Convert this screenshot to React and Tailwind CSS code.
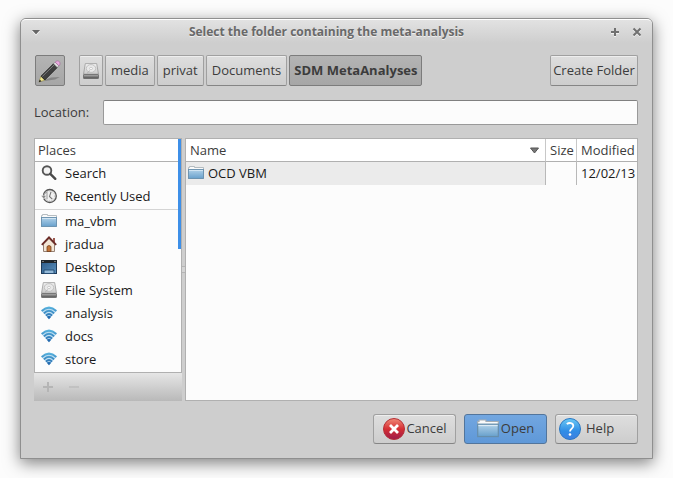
import { useState } from "react";

const PLACES = [
  { name: "Search", icon: SearchIcon },
  { name: "Recently Used", icon: RecentIcon },
  { name: "ma_vbm", icon: FolderIcon, divider: true },
  { name: "jradua", icon: HomeIcon },
  { name: "Desktop", icon: DesktopIcon },
  { name: "File System", icon: DriveIcon },
  { name: "analysis", icon: WifiIcon },
  { name: "docs", icon: WifiIcon },
  { name: "store", icon: WifiIcon },
];

const PATH = ["media", "privat", "Documents", "SDM MetaAnalyses"];

const FILES = [{ name: "OCD VBM", size: "", modified: "12/02/13" }];

// --- Icons ---
function SearchIcon() {
  return (
    <svg width="16" height="16" viewBox="0 0 16 16" fill="none">
      <circle cx="6" cy="5.5" r="4.3" fill="#f4f4f4" stroke="#555" strokeWidth="1.9" />
      <path d="M9.3 8.8 14.3 13.8" stroke="#4a4a4a" strokeWidth="2.4" strokeLinecap="round" />
    </svg>
  );
}

function RecentIcon() {
  return (
    <svg width="16" height="16" viewBox="0 0 16 16" fill="none">
      <circle cx="8.8" cy="8" r="6.5" fill="#e4e4e4" stroke="#555" strokeWidth="1.3" />
      <circle cx="8.8" cy="8" r="5" fill="#f1f1f1" stroke="#aaa" strokeWidth="0.8" strokeDasharray="1 1.5" />
      <path d="M10 3.8 8.5 8.5l2.8 2.6" stroke="#777" strokeWidth="1.1" />
      <path d="M0 7.5h5.6L2.8 11z" fill="#888" stroke="#f7f7f7" strokeWidth="0.6" />
      <path d="M2.8 8c.1-2.400 1.400-3.600 3.200-3.800v7" stroke="#999" />
    </svg>
  );
}

function FolderIcon({ size = 16 }) {
  return (
    <svg width={size} height={size} viewBox="0 0 16 16">
      <defs>
        <linearGradient id="folder" x1="0" y1="0" x2="0" y2="1">
          <stop offset="0" stopColor="#b2d2e9" />
          <stop offset="1" stopColor="#68a0cc" />
        </linearGradient>
      </defs>
      <path d="M.5 5.500V2.500h1v-1h5v1h9v3z" fill="#fafafa" stroke="#a5adb3" strokeWidth="0.8" />
      <rect x="0.5" y="4.500" width="15" height="9" fill="url(#folder)" stroke="#668eac" strokeWidth="0.9" />
      <path d="M1 5.500h14" stroke="#dbeaf5" strokeWidth="0.8" />
    </svg>
  );
}

function HomeIcon() {
  return (
    <svg width="16" height="16" viewBox="0 0 16 16">
      <path d="M12 2h2v5h-2z" fill="#9c5a50" />
      <path d="M2.500 8 8 2.500 13.500 8v7.500h-11z" fill="#f3e6d6" stroke="#8a7466" strokeWidth="0.9" />
      <path d="M.8 8.800 8 1.400l7.200 7.400" fill="none" stroke="#6b2b26" strokeWidth="1.800" />
      <path d="M6 15.500v-5q2-2 4 0v5z" fill="#c47436" stroke="#74411f" strokeWidth="0.8" />
    </svg>
  );
}

function DesktopIcon() {
  return (
    <svg width="16" height="16" viewBox="0 0 16 16">
      <defs>
        <linearGradient id="screen" x1="0" y1="0" x2="1" y2="1">
          <stop offset="0" stopColor="#2c5a88" />
          <stop offset="1" stopColor="#5b90bd" />
        </linearGradient>
      </defs>
      <rect x="0.500" y="1.500" width="15" height="13" fill="url(#screen)" stroke="#203c5a" />
      <path d="M0 1h16v3H0z" fill="#20272d" />
      <path d="M1 2.500h2M13 2.500h2" stroke="#777" />
      <path d="M3 14.500v-3.500h10v3.500z" fill="#93b9d8" stroke="#234a70" strokeWidth="0.9" />
    </svg>
  );
}

function DriveIcon() {
  return (
    <svg width="16" height="16" viewBox="0 0 16 16">
      <defs>
        <linearGradient id="drive" x1="0" y1="0" x2="0" y2="1">
          <stop offset="0" stopColor="#f1f1f1" />
          <stop offset="1" stopColor="#c9c9c9" />
        </linearGradient>
        <linearGradient id="driveFront" x1="0" y1="0" x2="0" y2="1">
          <stop offset="0" stopColor="#b5b5b5" />
          <stop offset="1" stopColor="#4c4c4c" />
        </linearGradient>
      </defs>
      <path d="M2.300.6h11.400l1.800 10.600H.5z" fill="url(#drive)" stroke="#9a9a9a" strokeWidth="0.8" />
      <ellipse cx="8" cy="5.500" rx="4.700" ry="3.900" fill="#e9e9e9" stroke="#b9b9b9" strokeWidth="0.8" />
      <ellipse cx="8" cy="5.500" rx="1.500" ry="1.200" fill="#f9f9f9" stroke="#b5b5b5" strokeWidth="0.6" />
      <path d="M4 10.300 7 7.500" stroke="#aaa" strokeWidth="0.8" />
      <rect x="0.500" y="11.500" width="15" height="4" rx="0.600" fill="url(#driveFront)" stroke="#666" strokeWidth="0.8" />
    </svg>
  );
}

function WifiIcon() {
  return (
    <svg width="16" height="16" viewBox="0 0 16 16" fill="none">
      <defs>
        <linearGradient id="wifi" gradientUnits="userSpaceOnUse" x1="0" y1="2" x2="0" y2="14">
          <stop offset="0" stopColor="#58b3de" />
          <stop offset="1" stopColor="#1d60a8" />
        </linearGradient>
      </defs>
      <path d="M.3 5.800Q8-1.300 15.700 5.800L8 14.200z" fill="#c0e0f2" />
      <g stroke="url(#wifi)" strokeWidth="2">
        <path d="M.6 6Q8-.8 15.400 6" />
        <path d="M2.900 8.400Q8 3.200 13.100 8.400" />
        <path d="M5 10.700Q8 7.400 11 10.700" />
      </g>
      <path d="M5.800 11.700Q8 9.700 10.200 11.700L8 14.200z" fill="url(#wifi)" />
    </svg>
  );
}

function PencilIcon() {
  return (
    <svg width="24" height="24" viewBox="0 0 24 24">
      <path d="M3 22.500 13 18.500l9-.5-5 2.500z" fill="#000" opacity="0.220" />
      <path d="M1 23 3 17.200 6.800 21z" fill="#f2e88e" stroke="#a3984d" strokeWidth="0.600" />
      <path d="M.8 23.200 1.700 20.600l1.800 1.600z" fill="#222" />
      <path d="M3 17.200 15.500 4.800l3.700 3.700L6.800 21z" fill="#404040" stroke="#1d1d1d" strokeWidth="0.800" />
      <path d="M4.300 17.500 16.200 5.800" stroke="#858585" strokeWidth="0.900" />
      <path d="m15.500 4.800 1.700-1.700 3.700 3.700-1.700 1.700z" fill="#ddd" stroke="#777" strokeWidth="0.600" />
      <path d="m17.200 3.100.6-.6c2.600-1.800 5.300.8 3.800 3.600l-.7.7z" fill="#eaa9e0" stroke="#a66b9e" strokeWidth="0.700" />
    </svg>
  );
}

function CancelIcon() {
  return (
    <svg width="24" height="24" viewBox="0 0 24 24">
      <defs>
        <linearGradient id="cancel" x1="0" y1="0" x2="0" y2="1">
          <stop offset="0" stopColor="#f08a78" />
          <stop offset="0.500" stopColor="#d62f33" />
          <stop offset="1" stopColor="#9c1b4c" />
        </linearGradient>
      </defs>
      <circle cx="12" cy="12" r="10.500" fill="url(#cancel)" stroke="#b52f36" />
      <path d="m8 8 8 8M16 8l-8 8" stroke="#fff" strokeWidth="2.800" />
    </svg>
  );
}

function HelpIcon() {
  return (
    <svg width="24" height="24" viewBox="0 0 24 24" fill="none">
      <defs>
        <linearGradient id="help" x1="0" y1="0" x2="0" y2="1">
          <stop offset="0" stopColor="#6bcaf5" />
          <stop offset="0.600" stopColor="#2f8de6" />
          <stop offset="1" stopColor="#3f7fe0" />
        </linearGradient>
      </defs>
      <circle cx="12" cy="12" r="10.500" fill="url(#help)" stroke="#2a78c4" />
      <path d="M8.800 7.200C11 5.200 15.400 5.800 15.300 9c-.1 2.500-3.300 2.700-3.300 5.500" stroke="#fff" strokeWidth="1.800" />
      <circle cx="12" cy="17.500" r="1.300" fill="#fff" />
    </svg>
  );
}

// --- Shared button look ---
const raised =
  "border border-[#a0a0a0] border-b-[#858585] bg-linear-to-b from-[#dedede] to-[#cdcdcd] shadow-[inset_0_1px_0_#eeeeee]";
const pressed =
  "border border-[#7c7c7c] bg-linear-to-b from-[#b4b4b4] to-[#a6a6a6]";

function ActionButton({ icon, primary, wide, children }) {
  return (
    <button
      className={`flex h-[30px] w-[83px] items-center rounded-[3px] ${
        primary
          ? "gap-0.5 border border-[#52759c] bg-linear-to-b from-[#72a6e0] to-[#5f98d8]"
          : raised
      } ${wide ? "gap-1 pl-0.5" : "justify-center"}`}
    >
      {icon}
      <span className="pb-0.5">{children}</span>
    </button>
  );
}

export default function App() {
  const [folder, setFolder] = useState("SDM MetaAnalyses");
  const [location, setLocation] = useState("");

  return (
    <div className="flex min-h-screen bg-[#fcfcfc] pt-[18px] pr-5 pb-[19px] pl-5 font-['Open_Sans','Noto_Sans',sans-serif] text-[13px] leading-5 text-[#3c3c3c]">
      <div className="flex min-w-0 flex-1 flex-col rounded-t-[6px] border border-[#8f8f8f] bg-[#cecece] shadow-[0_4px_16px_rgba(0,0,0,0.5)]">
        {/* Title bar */}
        <header className="flex h-6 items-center rounded-t-[5px] border-t border-white bg-linear-to-b from-[#e2e2e2] to-[#cecece] px-2.5">
          <button aria-label="Window menu" className="flex w-5 items-center">
            <svg width="10" height="8" viewBox="0 0 10 8">
              <path d="M1 3h8L5 7.500z" fill="#fff" />
              <path d="M1 2h8L5 6.500z" fill="#666" />
            </svg>
          </button>
          <h1 className="flex-1 text-center text-[12px] font-bold text-[#696969] [text-shadow:0_1px_0_#eeeeee]">
            Select the folder containing the meta-analysis
          </h1>
          <div className="flex w-10 justify-end gap-3">
            <button aria-label="Maximize">
              <svg width="10" height="10" viewBox="0 0 10 10">
                <path d="M5 2v8M1 6h8" stroke="#f2f2f2" strokeWidth="2" />
                <path d="M5 1v8M1 5h8" stroke="#717171" strokeWidth="2" />
              </svg>
            </button>
            <button aria-label="Close">
              <svg width="10" height="10" viewBox="0 0 10 10">
                <path d="m1.500 2.500 7 7m0-7-7 7" stroke="#f2f2f2" strokeWidth="2" />
                <path d="m1.500 1.500 7 7m0-7-7 7" stroke="#717171" strokeWidth="2" />
              </svg>
            </button>
          </div>
        </header>

        <main className="flex flex-1 flex-col pt-3 pr-3.5 pb-3.5 pl-[13px]">
          {/* Path bar */}
          <nav className="flex h-[31px] gap-0.5 pl-px">
            <button
              aria-label="Type a file name"
              className={`mr-3 flex w-[30px] items-center justify-center rounded-[2px] ${pressed}`}
            >
              <PencilIcon />
            </button>
            <button
              aria-label="File System"
              className={`flex w-6 items-center justify-center rounded-[2px] ${raised}`}
            >
              <DriveIcon />
            </button>
            {PATH.map((name) => (
              <button
                key={name}
                onClick={() => setFolder(name)}
                className={`rounded-[2px] pb-0.5 ${
                  name === folder ? `px-1 font-bold ${pressed}` : `px-[5px] ${raised}`
                }`}
              >
                {name}
              </button>
            ))}
            <button className={`ml-auto w-[88px] rounded-[2px] pb-0.5 whitespace-nowrap ${raised}`}>
              Create Folder
            </button>
          </nav>

          <div className="mt-3.5 flex h-[25px] items-center">
            <label htmlFor="location" className="w-[69px] pb-0.5">
              Location:
            </label>
            <input
              id="location"
              value={location}
              onChange={(e) => setLocation(e.target.value)}
              className="h-full min-w-0 flex-1 rounded-[2px] border border-[#999999] border-t-[#808080] bg-[#fcfcfc] px-2 outline-none"
            />
          </div>

          <div className="mt-[13px] flex flex-1">
            {/* Places */}
            <section className="flex w-[148px] flex-col">
              <div className="relative flex-1 border border-[#b0b0b0] bg-[#fcfcfc]">
                <h2 className="h-[23px] border-b border-[#b0b0b0] bg-white pl-[3px] leading-[22px]">
                  Places
                </h2>
                <ul className="text-[#1a1a1a]">
                  {PLACES.map(({ name, icon: Icon, divider }) => (
                    <li key={name} className={divider ? "mt-px border-t border-[#d4d4d4]" : ""}>
                      <button className="flex h-[23px] w-full items-center gap-2 pb-0.5 pl-1.5">
                        <Icon />
                        {name}
                      </button>
                    </li>
                  ))}
                </ul>
                <div className="absolute top-0 right-0 h-[110px] w-[3px] bg-[#3d8fe8]" />
              </div>
              <div className="flex h-7 items-center gap-3.5 bg-linear-to-b from-[#e6e6e6] to-[#b9b9b9] pl-2">
                <button aria-label="Add bookmark" disabled>
                  <svg width="12" height="12" viewBox="0 0 12 12">
                    <path d="M6 1v10M1 6h10" stroke="#b5b5b5" strokeWidth="2" />
                  </svg>
                </button>
                <button aria-label="Remove bookmark" disabled>
                  <svg width="12" height="12" viewBox="0 0 12 12">
                    <path d="M1 6h10" stroke="#bdbdbd" strokeWidth="1.500" />
                  </svg>
                </button>
              </div>
            </section>

            {/* Pane divider */}
            <div className="flex w-[3px] items-center">
              <div className="h-[7px] w-full border-y border-[#b5b5b5] bg-[#d4d4d4]" />
            </div>

            {/* Files */}
            <section className="min-w-0 flex-1 border border-[#b0b0b0] bg-[#fcfcfc]">
              <table className="w-full table-fixed border-separate border-spacing-0 text-left">
                <thead>
                  <tr className="h-[23px] bg-white">
                    <th className="border-b border-[#b0b0b0] p-0 pl-1 font-normal">
                      <div className="flex items-center justify-between pr-1.5">
                        Name
                        <svg width="9" height="7" viewBox="0 0 9 7">
                          <path d="M.5 1h8l-4 5z" fill="#777" stroke="#555" />
                        </svg>
                      </div>
                    </th>
                    <th className="w-[31px] border-b border-l border-b-[#b0b0b0] border-l-[#c8c8c8] p-0 pl-1 font-normal">
                      Size
                    </th>
                    <th className="w-[61px] border-b border-l border-b-[#b0b0b0] border-l-[#c8c8c8] p-0 pl-1 font-normal">
                      Modified
                    </th>
                  </tr>
                </thead>
                <tbody className="text-[#1a1a1a]">
                  {FILES.map((file) => (
                    <tr key={file.name} className="h-[23px]">
                      <td className="bg-[#ebebeb] p-0 pb-0.5 pl-0.5">
                        <div className="flex items-center gap-1">
                          <FolderIcon />
                          {file.name}
                        </div>
                      </td>
                      <td className="border-l border-[#b8b8b8] p-0 pl-1">{file.size}</td>
                      <td className="border-l border-[#b8b8b8] p-0 pb-0.5 pl-1">{file.modified}</td>
                    </tr>
                  ))}
                </tbody>
              </table>
            </section>
          </div>

          {/* Actions */}
          <footer className="mt-[13px] flex justify-end gap-2">
            <ActionButton icon={<CancelIcon />}>Cancel</ActionButton>
            <ActionButton icon={<FolderIcon size={22} />} primary>
              Open
            </ActionButton>
            <ActionButton icon={<HelpIcon />} wide>
              Help
            </ActionButton>
          </footer>
        </main>
      </div>
    </div>
  );
}
